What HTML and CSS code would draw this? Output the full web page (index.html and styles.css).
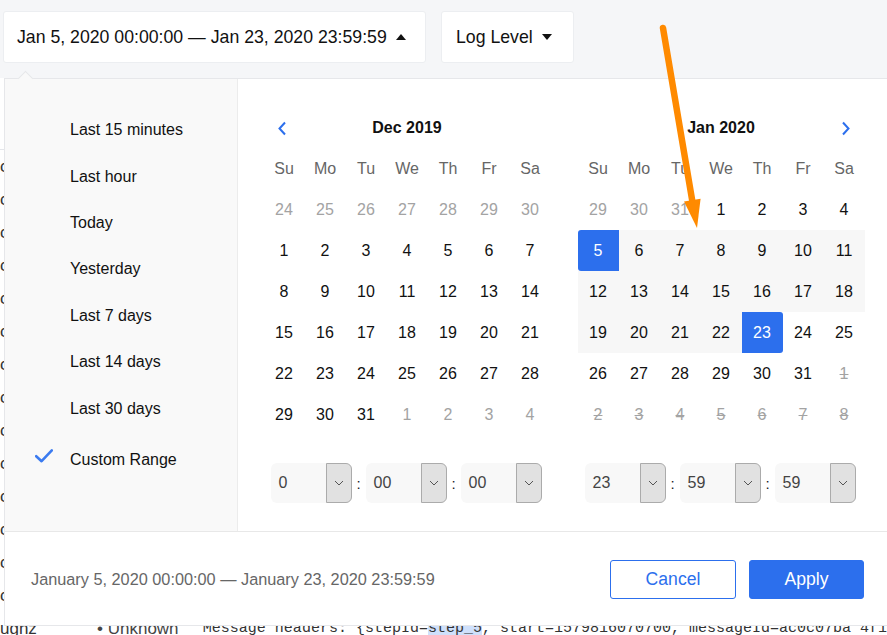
FILE: index.html
```html
<!DOCTYPE html>
<html>
<head>
<meta charset="utf-8">
<title>Logs</title>
<link rel="stylesheet" href="styles.css">
</head>
<body>
<div class="page">
  <div class="toolbar">
    <button class="tb-btn range-btn"><span class="tb-label">Jan 5, 2020 00:00:00 — Jan 23, 2020 23:59:59</span><span class="tri tri-up"></span></button>
    <button class="tb-btn level-btn"><span class="tb-label">Log Level</span><span class="tri tri-down"></span></button>
  </div>

  <div class="logs">
    <div class="log-head"></div>
    <div class="log-row"><span class="c-id">c0a1</span></div>
    <div class="log-row"><span class="c-id">c0a1</span></div>
    <div class="log-row"><span class="c-id">c0a1</span></div>
    <div class="log-row"><span class="c-id">c0a1</span></div>
    <div class="log-row"><span class="c-id">c0a1</span></div>
    <div class="log-row"><span class="c-id">c0a1</span></div>
    <div class="log-row"><span class="c-id">c0a1</span></div>
    <div class="log-row"><span class="c-id">c0a1</span></div>
    <div class="log-row"><span class="c-id">c0a1</span></div>
    <div class="log-row"><span class="c-id">c0a1</span></div>
    <div class="log-row"><span class="c-id">c0a1</span></div>
    <div class="log-row"><span class="c-id">c0a1</span></div>
    <div class="log-row"><span class="c-id">c0a1</span></div>
    <div class="log-row"><span class="c-id">c0a1</span></div>
    <div class="log-row"><span class="c-id">ughz</span><span class="c-lvl">• Unknown</span><span class="c-msg">Message headers: {stepId=<mark class="sel">step_5</mark>, start=1579816070700, messageId=ac0c07ba 4f1</span></div>
  </div>

  <div class="popup">
    <span class="notch"></span>
    <div class="popup-body">
      <ul class="ranges">
        <li class="range-item"><span class="lead"></span>Last 15 minutes</li>
        <li class="range-item"><span class="lead"></span>Last hour</li>
        <li class="range-item"><span class="lead"></span>Today</li>
        <li class="range-item"><span class="lead"></span>Yesterday</li>
        <li class="range-item"><span class="lead"></span>Last 7 days</li>
        <li class="range-item"><span class="lead"></span>Last 14 days</li>
        <li class="range-item"><span class="lead"></span>Last 30 days</li>
        <li class="range-item custom"><span class="lead"><svg class="check" width="18" height="14" viewBox="0 0 18 14"><path d="M1.2 7.2 L6.6 12.2 L16.8 1.4" fill="none" stroke="#3b7bf0" stroke-width="2.6" stroke-linecap="round" stroke-linejoin="round"/></svg></span>Custom Range</li>
      </ul>

      <div class="calendars">
        <div class="cal">
          <div class="cal-head">
            <span class="nav nav-left"><svg width="10" height="15" viewBox="0 0 10 15"><path d="M8 1.5 L2.5 7.5 L8 13.5" fill="none" stroke="#2c6fed" stroke-width="2"/></svg></span>
            <span class="cal-title">Dec 2019</span>
            <span class="nav nav-right"></span>
          </div>
          <div class="cal-grid">
            <span class="wd">Su</span><span class="wd">Mo</span><span class="wd">Tu</span><span class="wd">We</span><span class="wd">Th</span><span class="wd">Fr</span><span class="wd">Sa</span>
            <span class="d off">24</span><span class="d off">25</span><span class="d off">26</span><span class="d off">27</span><span class="d off">28</span><span class="d off">29</span><span class="d off">30</span>
            <span class="d">1</span><span class="d">2</span><span class="d">3</span><span class="d">4</span><span class="d">5</span><span class="d">6</span><span class="d">7</span>
            <span class="d">8</span><span class="d">9</span><span class="d">10</span><span class="d">11</span><span class="d">12</span><span class="d">13</span><span class="d">14</span>
            <span class="d">15</span><span class="d">16</span><span class="d">17</span><span class="d">18</span><span class="d">19</span><span class="d">20</span><span class="d">21</span>
            <span class="d">22</span><span class="d">23</span><span class="d">24</span><span class="d">25</span><span class="d">26</span><span class="d">27</span><span class="d">28</span>
            <span class="d">29</span><span class="d">30</span><span class="d">31</span><span class="d off">1</span><span class="d off">2</span><span class="d off">3</span><span class="d off">4</span>
          </div>
          <div class="time">
            <div class="tsel"><span class="tval">0</span><span class="tbtn"><svg width="10" height="6" viewBox="0 0 10 6"><path d="M1 1 L5 5 L9 1" fill="none" stroke="#555" stroke-width="1"/></svg></span></div>
            <span class="colon">:</span>
            <div class="tsel"><span class="tval">00</span><span class="tbtn"><svg width="10" height="6" viewBox="0 0 10 6"><path d="M1 1 L5 5 L9 1" fill="none" stroke="#555" stroke-width="1"/></svg></span></div>
            <span class="colon">:</span>
            <div class="tsel"><span class="tval">00</span><span class="tbtn"><svg width="10" height="6" viewBox="0 0 10 6"><path d="M1 1 L5 5 L9 1" fill="none" stroke="#555" stroke-width="1"/></svg></span></div>
          </div>
        </div>

        <div class="cal">
          <div class="cal-head">
            <span class="nav nav-left"></span>
            <span class="cal-title">Jan 2020</span>
            <span class="nav nav-right"><svg width="10" height="15" viewBox="0 0 10 15"><path d="M2 1.5 L7.5 7.5 L2 13.5" fill="none" stroke="#2c6fed" stroke-width="2"/></svg></span>
          </div>
          <div class="cal-grid">
            <span class="wd">Su</span><span class="wd">Mo</span><span class="wd">Tu</span><span class="wd">We</span><span class="wd">Th</span><span class="wd">Fr</span><span class="wd">Sa</span>
            <span class="d off">29</span><span class="d off">30</span><span class="d off">31</span><span class="d">1</span><span class="d">2</span><span class="d">3</span><span class="d">4</span>
            <span class="d start">5</span><span class="d in">6</span><span class="d in">7</span><span class="d in">8</span><span class="d in">9</span><span class="d in">10</span><span class="d in">11</span>
            <span class="d in">12</span><span class="d in">13</span><span class="d in">14</span><span class="d in">15</span><span class="d in">16</span><span class="d in">17</span><span class="d in">18</span>
            <span class="d in">19</span><span class="d in">20</span><span class="d in">21</span><span class="d in">22</span><span class="d end">23</span><span class="d">24</span><span class="d">25</span>
            <span class="d">26</span><span class="d">27</span><span class="d">28</span><span class="d">29</span><span class="d">30</span><span class="d">31</span><span class="d dis">1</span>
            <span class="d dis">2</span><span class="d dis">3</span><span class="d dis">4</span><span class="d dis">5</span><span class="d dis">6</span><span class="d dis">7</span><span class="d dis">8</span>
          </div>
          <div class="time">
            <div class="tsel"><span class="tval">23</span><span class="tbtn"><svg width="10" height="6" viewBox="0 0 10 6"><path d="M1 1 L5 5 L9 1" fill="none" stroke="#555" stroke-width="1"/></svg></span></div>
            <span class="colon">:</span>
            <div class="tsel"><span class="tval">59</span><span class="tbtn"><svg width="10" height="6" viewBox="0 0 10 6"><path d="M1 1 L5 5 L9 1" fill="none" stroke="#555" stroke-width="1"/></svg></span></div>
            <span class="colon">:</span>
            <div class="tsel"><span class="tval">59</span><span class="tbtn"><svg width="10" height="6" viewBox="0 0 10 6"><path d="M1 1 L5 5 L9 1" fill="none" stroke="#555" stroke-width="1"/></svg></span></div>
          </div>
        </div>
      </div>
    </div>

    <div class="popup-foot">
      <span class="summary">January 5, 2020 00:00:00 — January 23, 2020 23:59:59</span>
      <div class="actions">
        <button class="btn btn-cancel">Cancel</button>
        <button class="btn btn-apply">Apply</button>
      </div>
    </div>
  </div>

  <svg class="annot" width="887" height="635" viewBox="0 0 887 635">
    <line x1="663" y1="28" x2="692.3" y2="201" stroke="#ff8a00" stroke-width="6.5" stroke-linecap="round"/>
    <polygon points="697,228 700.6,198.8 684,201.6" fill="#ff8a00"/>
  </svg>
</div>
</body>
</html>
```

FILE: styles.css
```css
* { box-sizing: border-box; }

html, body {
  margin: 0;
  padding: 0;
}

body {
  width: 887px;
  height: 635px;
  overflow: hidden;
  background: #f5f6f8;
  font-family: "Liberation Sans", Arial, sans-serif;
  font-size: 16px;
  color: #111;
}

.page {
  position: relative;
  width: 887px;
  height: 635px;
  overflow: hidden;
}

/* toolbar */
.toolbar {
  height: 78px;
  padding: 11px 0 0 3px;
  display: flex;
  gap: 15px;
  background: #f5f6f8;
}

.tb-btn {
  height: 52px;
  display: flex;
  align-items: center;
  justify-content: flex-start;
  gap: 9px;
  padding: 0 21px 0 13px;
  background: #fff;
  border: 1px solid #eceef1;
  border-radius: 3px;
  font-family: "Liberation Sans", Arial, sans-serif;
  font-size: 17.7px;
  color: #111;
  white-space: nowrap;
  text-align: left;
}
.tb-label { white-space: nowrap; }

.range-btn { width: 423px; }
.level-btn { width: 133px; padding-left: 14px; }

.tri {
  flex: none;
  width: 0;
  height: 0;
  border-left: 5.5px solid transparent;
  border-right: 5.5px solid transparent;
}
.tri-up { border-bottom: 6px solid #111; }
.tri-down { border-top: 6px solid #111; }

/* background log table */
.logs {
  background: #fff;
  height: 557px;
}
.log-head {
  height: 72px;
  border-bottom: 1px solid #e4e6ea;
}
.log-row {
  height: 33px;
  display: flex;
  align-items: center;
  white-space: nowrap;
  font-size: 17px;
  color: #333;
}
.c-id { width: 99px; }
.c-lvl { width: 108px; color: #444; }
.c-msg { font-family: "Liberation Mono", monospace; font-size: 15px; }
.sel { background: #cfe0fb; color: inherit; }

/* popup */
.popup {
  position: absolute;
  top: 78px;
  left: 4px;
  width: 883px;
  background: #fff;
  border: 1px solid #e6e7ea;
  border-right: none;
}

.notch {
  position: absolute;
  top: -6px;
  left: 15px;
  width: 11px;
  height: 11px;
  background: #f9f9f9;
  border-top: 1px solid #e6e7ea;
  border-left: 1px solid #e6e7ea;
  transform: rotate(45deg);
}

.popup-body {
  display: flex;
  height: 452px;
}

.ranges {
  list-style: none;
  margin: 0;
  padding: 28px 0 0 0;
  width: 233px;
  background: #f9f9f9;
  border-right: 1px solid #ececec;
}
.range-item {
  height: 46.4px;
  display: flex;
  align-items: center;
  font-size: 16px;
  color: #111;
}
.range-item.custom { margin-top: 5px; }
.lead {
  width: 65px;
  padding-left: 30px;
  display: flex;
  align-items: center;
}
.check { margin-bottom: 8px; }

.calendars {
  display: flex;
  gap: 27px;
  padding: 37px 0 0 25.5px;
}

.cal { width: 287px; }

.cal-head {
  height: 24px;
  margin-bottom: 8px;
  display: grid;
  grid-template-columns: 1fr auto 1fr;
  align-items: center;
}
.cal-title {
  font-weight: bold;
  font-size: 16px;
  color: #111;
}
.nav { display: flex; }
.nav-left { padding-left: 13.5px; justify-content: flex-start; }
.nav-right { padding-right: 13.5px; justify-content: flex-end; }

.cal-grid {
  display: grid;
  grid-template-columns: repeat(7, 41px);
  grid-auto-rows: 41px;
}
.wd, .d {
  display: flex;
  align-items: center;
  justify-content: center;
  font-size: 16px;
}
.wd { color: #666; }
.d { color: #111; }
.d.off { color: #a3a3a3; }
.d.dis { color: #a3a3a3; text-decoration: line-through; }
.d.in { background: #f7f7f7; }
.d.start { background: #2c6fed; color: #fff; border-radius: 3px 0 0 3px; }
.d.end { background: #2c6fed; color: #fff; border-radius: 0 3px 3px 0; }

.time {
  display: flex;
  align-items: center;
  margin-top: 28px;
  padding-left: 7px;
}
.tsel {
  width: 81px;
  height: 40px;
  display: flex;
  align-items: center;
  justify-content: space-between;
  background: #f8f8f8;
  border-radius: 6px;
}
.tval {
  padding-left: 8px;
  font-size: 16px;
  color: #444;
}
.tbtn {
  width: 26px;
  height: 40px;
  display: flex;
  align-items: center;
  justify-content: center;
  background: #e1e1e1;
  border: 1px solid #ababab;
  border-radius: 0 6px 6px 0;
}
.colon {
  width: 14px;
  text-align: center;
  font-size: 15px;
  color: #222;
}

/* footer */
.popup-foot {
  height: 94px;
  border-top: 1px solid #e8e8e8;
  display: flex;
  align-items: center;
  padding: 1px 23px 0 26px;
}
.summary {
  font-size: 16.3px;
  color: #666;
}
.actions {
  margin-left: auto;
  display: flex;
  gap: 13px;
}
.btn {
  height: 39px;
  border-radius: 3px;
  font-family: "Liberation Sans", Arial, sans-serif;
  font-size: 17.6px;
}
.btn-cancel {
  width: 126px;
  background: #fff;
  border: 1px solid #2c6fed;
  color: #2c6fed;
}
.btn-apply {
  width: 115px;
  background: #2c6fed;
  border: 1px solid #2c6fed;
  color: #fff;
}

/* annotation arrow overlay */
.annot {
  position: absolute;
  top: 0;
  left: 0;
  pointer-events: none;
}
```
